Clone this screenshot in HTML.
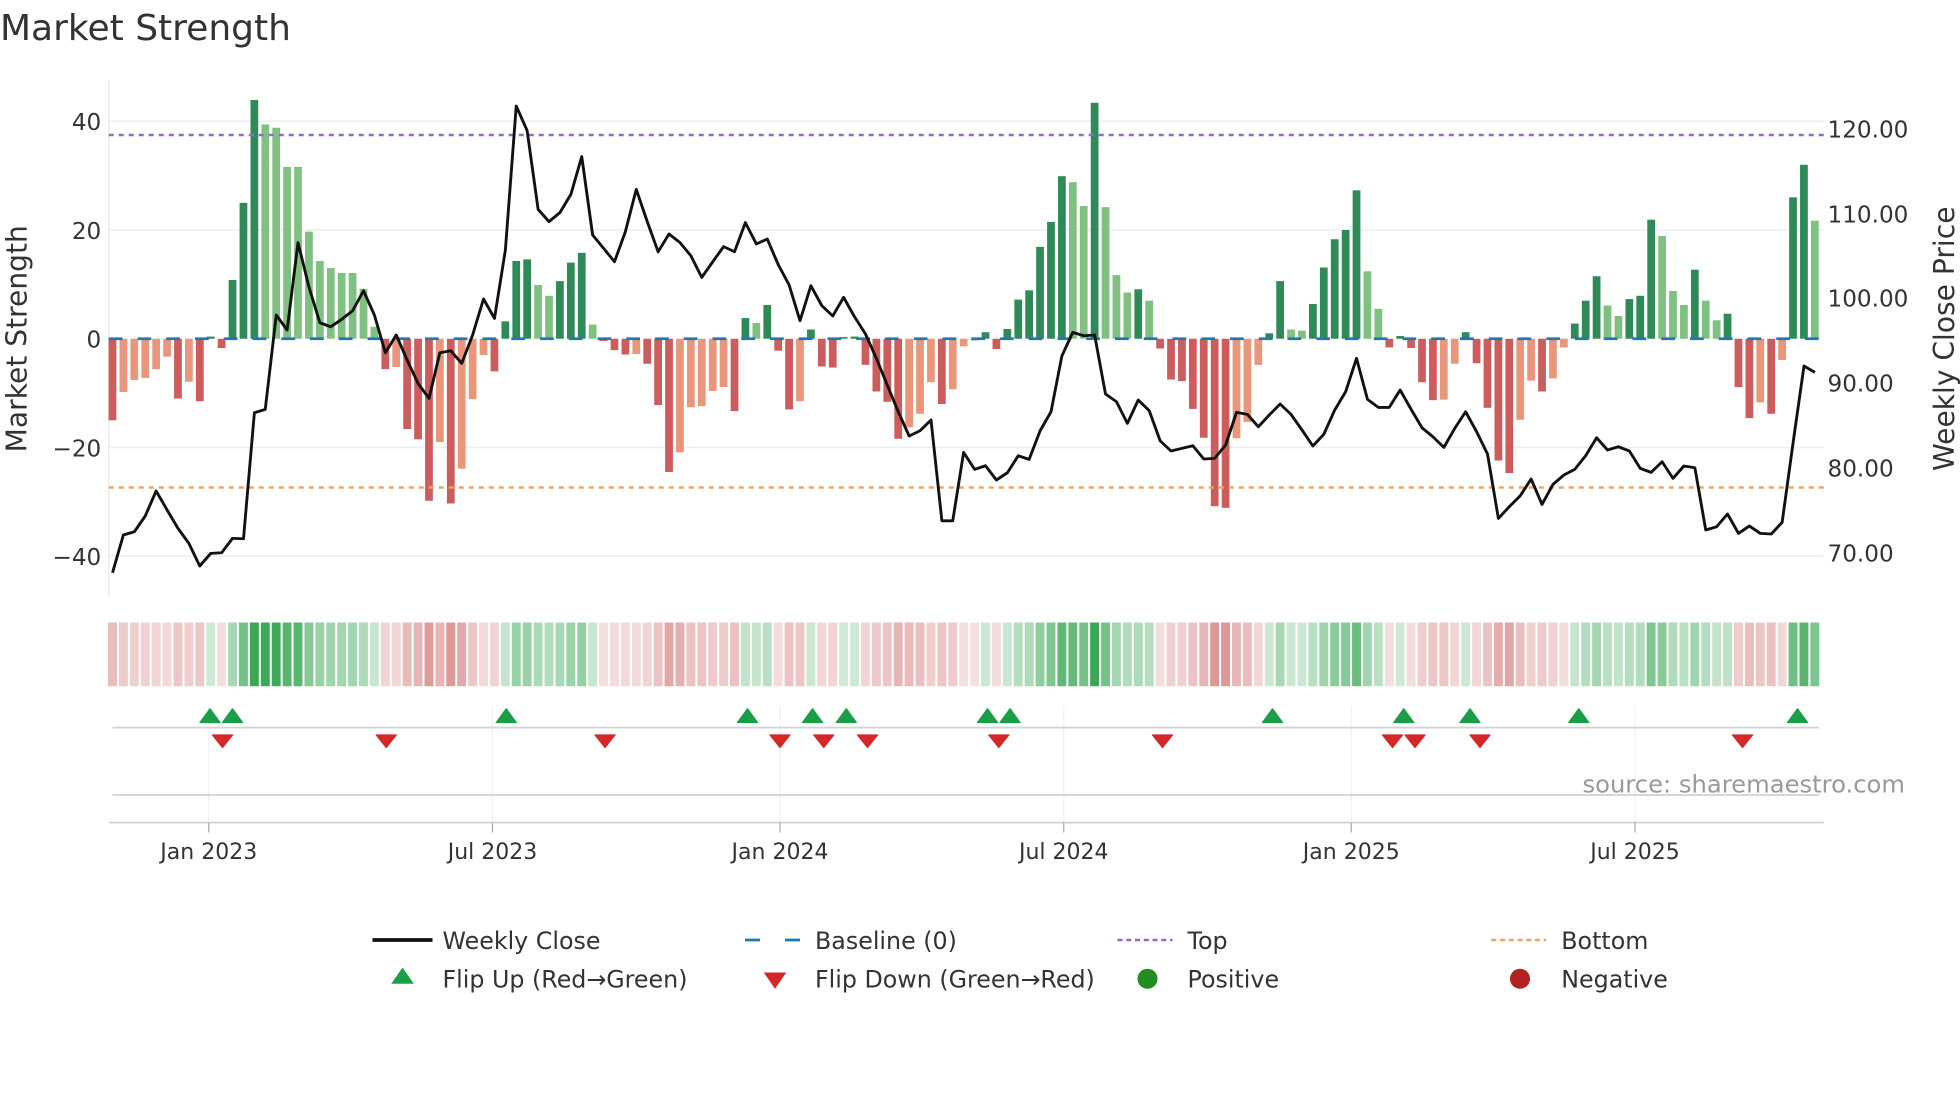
<!DOCTYPE html>
<html><head><meta charset="utf-8"><style>
html,body{margin:0;padding:0;background:#fff;}
svg{display:block;}
text{font-family:"DejaVu Sans","Liberation Sans",sans-serif;fill:#333;}
</style></head><body>
<svg id="s" width="1960" height="1102" viewBox="0 0 1568 881.6" xmlns="http://www.w3.org/2000/svg">
<text x="0" y="32" font-size="28.8">Market Strength</text>
<g stroke="#eeeef2" stroke-width="1.2">
<line x1="87" y1="97" x2="1459" y2="97"/><line x1="87" y1="184" x2="1459" y2="184"/>
<line x1="87" y1="358" x2="1459" y2="358"/><line x1="87" y1="445" x2="1459" y2="445"/>
</g>
<line x1="87" y1="64" x2="87" y2="478" stroke="#e8e8e8" stroke-width="1"/>
<g font-size="18.5" text-anchor="end">
<text x="81" y="104">40</text><text x="81" y="191">20</text><text x="81" y="278">0</text>
<text x="81" y="365">−20</text><text x="81" y="452">−40</text>
</g>
<g font-size="18.5">
<text x="1462" y="110">120.00</text><text x="1462" y="178">110.00</text><text x="1462" y="245">100.00</text>
<text x="1462" y="313">90.00</text><text x="1462" y="381">80.00</text><text x="1462" y="449">70.00</text>
</g>
<text transform="translate(21,271) rotate(-90)" font-size="22.5" text-anchor="middle">Market Strength</text>
<text transform="translate(1563,271) rotate(-90)" font-size="22.5" text-anchor="middle">Weekly Close Price</text>
<g id="bars"></g>
<line x1="87" y1="271" x2="1459" y2="271" stroke="#1f77b4" stroke-width="2.2" stroke-dasharray="11,12"/>
<line x1="87" y1="108" x2="1459" y2="108" stroke="#9467d4" stroke-width="2" stroke-dasharray="4,4"/>
<line x1="87" y1="390" x2="1459" y2="390" stroke="#f4a261" stroke-width="2" stroke-dasharray="4,4"/>
<polyline id="price" fill="none" stroke="#111" stroke-width="2.3" stroke-linejoin="round"/>
<g id="heat"></g>
<g stroke="#eef0f4" stroke-width="1">
<line x1="167" y1="565" x2="167" y2="658"/><line x1="394" y1="565" x2="394" y2="658"/>
<line x1="624" y1="565" x2="624" y2="658"/><line x1="851" y1="565" x2="851" y2="658"/>
<line x1="1081" y1="565" x2="1081" y2="658"/><line x1="1308" y1="565" x2="1308" y2="658"/>
</g>
<line x1="90" y1="582" x2="1455" y2="582" stroke="#d4d4d4" stroke-width="1.5"/>
<line x1="90" y1="636" x2="1455" y2="636" stroke="#d4d4d4" stroke-width="1.5"/>
<line x1="87" y1="658" x2="1459" y2="658" stroke="#d4d4d4" stroke-width="1.5"/>
<g id="marks"></g>
<g stroke="#aaa" stroke-width="1">
<line x1="167" y1="658" x2="167" y2="666"/><line x1="394" y1="658" x2="394" y2="666"/>
<line x1="624" y1="658" x2="624" y2="666"/><line x1="851" y1="658" x2="851" y2="666"/>
<line x1="1081" y1="658" x2="1081" y2="666"/><line x1="1308" y1="658" x2="1308" y2="666"/>
</g>
<g font-size="17.6" text-anchor="middle">
<text x="167" y="687">Jan 2023</text><text x="394" y="687">Jul 2023</text><text x="624" y="687">Jan 2024</text>
<text x="851" y="687">Jul 2024</text><text x="1081" y="687">Jan 2025</text><text x="1308" y="687">Jul 2025</text>
</g>
<text x="1524" y="634" font-size="19.4" text-anchor="end" style="fill:#999">source: sharemaestro.com</text>
<g font-size="19">
<line x1="298" y1="752" x2="346" y2="752" stroke="#111" stroke-width="3"/>
<text x="354" y="759">Weekly Close</text>
<line x1="596" y1="752" x2="640" y2="752" stroke="#1f77b4" stroke-width="2.2" stroke-dasharray="12,20"/>
<text x="652" y="759">Baseline (0)</text>
<line x1="894" y1="752" x2="938" y2="752" stroke="#9467d4" stroke-width="2" stroke-dasharray="4,3"/>
<text x="950" y="759">Top</text>
<line x1="1193" y1="752" x2="1237" y2="752" stroke="#f4a261" stroke-width="2" stroke-dasharray="4,3"/>
<text x="1249" y="759">Bottom</text>
<path d="M322 774 L331 787 L313 787 Z" fill="#1a9e48"/>
<text x="354" y="790">Flip Up (Red→Green)</text>
<path d="M611 778 L629 778 L620 791 Z" fill="#d62728"/>
<text x="652" y="790">Flip Down (Green→Red)</text>
<circle cx="918" cy="783" r="8" fill="#228b22"/>
<text x="950" y="790">Positive</text>
<circle cx="1216" cy="783" r="8" fill="#b22222"/>
<text x="1249" y="790">Negative</text>
</g>
</svg>
<script>
var V=[-15,'R',-9.8,'O',-7.6,'O',-7.2,'O',-5.6,'O',-3.3,'O',-11,'R',-7.9,'O',-11.5,'R',0.4,'D',-1.7,'R',10.8,'D',25,'D',43.9,'D',39.4,'L',38.8,'L',31.6,'L',31.6,'L',19.7,'L',14.3,'L',13,'L',12.1,'L',12.1,'L',9.2,'L',2.2,'L',-5.6,'R',-5.2,'O',-16.6,'R',-18.5,'R',-29.8,'R',-19,'O',-30.3,'R',-23.9,'O',-11.1,'O',-3,'O',-6,'R',3.2,'D',14.3,'D',14.6,'D',9.9,'L',7.9,'L',10.6,'D',14,'D',15.8,'D',2.6,'L',-0.4,'R',-2.1,'R',-2.9,'R',-2.8,'O',-4.6,'R',-12.2,'R',-24.5,'R',-20.9,'O',-12.6,'O',-12.4,'O',-9.6,'O',-8.9,'O',-13.3,'R',3.8,'D',2.9,'L',6.2,'D',-2.2,'R',-13,'R',-11.5,'O',1.7,'D',-5.1,'R',-5.3,'R',0.3,'D',0.4,'D',-4.8,'R',-9.7,'R',-11.6,'R',-18.4,'R',-16.3,'O',-13.8,'O',-8,'O',-12,'R',-9.3,'O',-1.4,'O',-0.3,'O',1.2,'D',-1.9,'R',1.8,'D',7.2,'D',8.9,'D',16.9,'D',21.5,'D',29.9,'D',28.8,'L',24.4,'L',43.4,'D',24.2,'L',11.7,'L',8.5,'L',9.1,'D',7,'L',-1.8,'R',-7.5,'R',-7.8,'R',-12.9,'R',-18.2,'R',-30.8,'R',-31.1,'R',-18.3,'O',-15.3,'O',-4.8,'O',1,'D',10.6,'D',1.7,'L',1.5,'L',6.4,'D',13.1,'D',18.3,'D',20,'D',27.3,'D',12.4,'L',5.5,'L',-1.6,'R',0.5,'D',-1.7,'R',-8,'R',-11.3,'R',-11.2,'O',-4.6,'O',1.2,'D',-4.5,'R',-12.7,'R',-22.4,'R',-24.7,'R',-14.9,'O',-7.7,'O',-9.7,'R',-7.3,'O',-1.6,'O',2.8,'D',7,'D',11.5,'D',6.1,'L',4.2,'L',7.3,'D',7.9,'D',21.9,'D',18.9,'L',8.8,'L',6.2,'L',12.7,'D',7,'L',3.4,'L',4.6,'D',-8.9,'R',-14.6,'R',-11.7,'O',-13.8,'R',-3.9,'O',26,'D',32,'D',21.7,'L'];
var P=[1478,1365,1355,1308,1233,1290,1345,1390,1458,1420,1418,1375,1376,998,988,705,750,488,620,728,740,718,692,632,705,818,765,840,910,955,818,812,850,765,657,715,510,78,152,388,425,398,343,230,465,505,545,455,328,425,515,462,488,527,592,545,
500,515,428,492,477,553,615,722,617,677,708,652,710,762,835,915,995,1068,1052,1020,1322,1322,1117,1168,1157,1200,1178,1127,1138,1052,995,828,757,767,765,942,965,1030,960,992,1082,1113,1105,1097,1137,1135,1095,997,1003,1040,1005,972,1003,1050,1098,
1063,990,935,835,958,982,982,930,988,1043,1070,1102,1045,995,1055,1122,1315,1280,1247,1197,1273,1213,1185,1168,1127,1073,1110,1100,1113,1165,1177,1145,1195,1158,1163,1350,1340,1302,1360,1338,1360,1362,1327,1090,858,877];
var C={D:'#2e8b57',L:'#80c080',R:'#cd5c5c',O:'#e9967a'};
var ns='http://www.w3.org/2000/svg';
function el(t,a,p){var e=document.createElementNS(ns,t);for(var k in a)e.setAttribute(k,a[k]);document.getElementById(p).appendChild(e);return e;}
var n=V.length/2,dx=8.73;
function mix(c,t){return 'rgb('+[0,1,2].map(function(i){return Math.round(255+(c[i]-255)*t)}).join(',')+')';}
for(var i=0;i<n;i++){
 var v=V[2*i],c=V[2*i+1],x=90+i*dx;
 var h=Math.abs(v)*4.35;if(h<1.2)h=1.2;
 el('rect',{x:(x-3.1).toFixed(2),y:(v>=0?271-h:271).toFixed(2),width:6.2,height:h.toFixed(2),fill:C[c]},'bars');
 var t=Math.min(1,Math.abs(v)/40)*0.7+0.22;
 var col=v>=0?mix([40,160,70],t):mix([205,95,95],t*0.85);
 el('rect',{x:(x-4.37+0.8).toFixed(2),y:498,width:(dx-1.6).toFixed(2),height:51,fill:col},'heat');
}
var pts=[];for(var i=0;i<P.length;i++)pts.push((90+i*dx).toFixed(1)+','+(64+P[i]*0.2667).toFixed(1));
document.getElementById('price').setAttribute('points',pts.join(' '));
[168,186,405,598,650,677,790,808,1018,1123,1176,1263,1438].forEach(function(x){el('path',{d:'M'+x+' 567 L'+(x+8)+' 578 L'+(x-8)+' 578 Z',fill:'#1a9e48','stroke':'#1a9e48','stroke-width':1,'stroke-linejoin':'round'},'marks');});
[178,309,484,624,659,694,799,930,1114,1132,1184,1394].forEach(function(x){el('path',{d:'M'+(x-8)+' 588 L'+(x+8)+' 588 L'+x+' 598 Z',fill:'#d62728','stroke':'#d62728','stroke-width':1,'stroke-linejoin':'round'},'marks');});
</script>
</body></html>
